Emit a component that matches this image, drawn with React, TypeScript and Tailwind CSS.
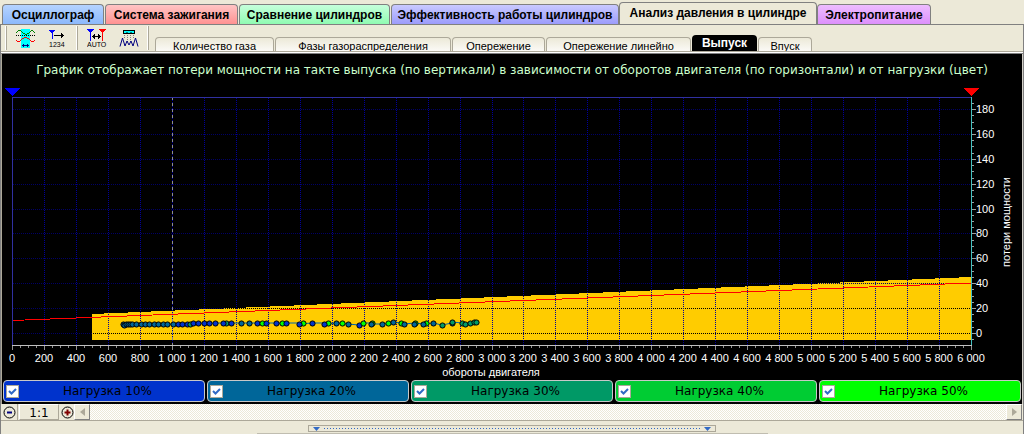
import { useState } from "react";

const mainTabs = [
    { label: "Осциллограф", style: "w-[102px] mr-px bg-linear-to-b from-[#b5d3ff] to-[#8cb8fb]" },
    { label: "Система зажигания", style: "w-[133px] mr-px bg-linear-to-b from-[#ffc4c4] to-[#ff9292]" },
    { label: "Сравнение цилиндров", style: "w-[151px] mr-px bg-linear-to-b from-[#c4ffdb] to-[#90fbb2]" },
    { label: "Эффективность работы цилиндров", style: "w-[228px] bg-linear-to-b from-[#c9c9ff] to-[#9c9cfb]" },
    { label: "Анализ давления в цилиндре", style: "w-[198px] bg-[#ece9d8]" },
    { label: "Электропитание", style: "w-[114px] bg-linear-to-b from-[#edbcff] to-[#dd90fb]" },
]

const subTabs = [
    { label: "Количество газа", width: "w-[119px]" },
    { label: "Фазы газораспределения", width: "w-[176px]" },
    { label: "Опережение", width: "w-[93px]" },
    { label: "Опережение линейно", width: "w-[145px]" },
    { label: "Выпуск", width: "w-[65px]" },
    { label: "Впуск", width: "w-[54px]" },
]

const loads = [
    { label: "Нагрузка 10%", color: "bg-[#0033cc]" },
    { label: "Нагрузка 20%", color: "bg-[#006699]" },
    { label: "Нагрузка 30%", color: "bg-[#009966]" },
    { label: "Нагрузка 40%", color: "bg-[#00cc33]" },
    { label: "Нагрузка 50%", color: "bg-[#00ff00]" },
]

const B = "#0033cc"
const T = "#006699"
const G = "#009966"
const L = "#00ff00"

// x, y, color
const points: [number, number, string][] = [
    [121, 238, T], [122, 239, T], [124, 238, T], [126, 238, T], [128, 238, T], [130, 238, T], [134, 238, T], [139, 238, T],
    [143, 238, T], [147, 238, T], [152, 238, T], [156, 238, T], [161, 238, T], [165, 238, T], [171, 238, T], [176, 238, B],
    [180, 238, B], [185, 238, B], [188, 238, G], [191, 237, B], [196, 237, B], [202, 237, B], [207, 237, B], [213, 237, B],
    [224, 237, G], [221, 237, B], [229, 237, B], [239, 237, T], [247, 237, T], [255, 237, B], [260, 237, L], [264, 237, B],
    [274, 237, B], [280, 237, L], [284, 237, B], [301, 237, L], [297, 238, B], [310, 237, B], [326, 237, L], [322, 238, B],
    [334, 237, T], [340, 237, L], [346, 238, T], [357, 239, B], [361, 237, L], [370, 237, L], [369, 238, T], [380, 238, T],
    [386, 237, L], [391, 236, T], [399, 237, L], [402, 238, T], [413, 237, L], [412, 238, T], [424, 237, L], [421, 238, T],
    [431, 237, T], [440, 239, G], [450, 237, T], [450, 236, G], [460, 237, G], [463, 238, G], [468, 237, G], [472, 236, G],
    [474, 236, G],
]

const rpmX = (rpm) => Math.round(10 + rpm * 959 / 6000)
const lossY = (v) => Math.round(247 - v * 1.244)

const rpmTicks = Array.from({ length: 31 }, (_, i) => i * 200)
const lossTicks = Array.from({ length: 10 }, (_, i) => i * 20)

const formatRpm = (n) => n < 1000 ? String(n) : Math.floor(n / 1000) + " " + String(n % 1000).padStart(3, "0")

const Chart = () => {
    const minorX = Array.from({ length: 121 }, (_, i) => i * 50)
    const minorY = Array.from({ length: 39 }, (_, i) => i * 5 - 5)
    return (
        <svg viewBox="0 0 1020 294" className="block w-full" shapeRendering="crispEdges">
            <polygon points="90,228 969,191 969,254 90,254" fill="#ffcc00" />
            {lossTicks.map(v =>
                <g key={v}>
                    <line x1="11" x2="969" y1={lossY(v) + 0.5} y2={lossY(v) + 0.5} stroke="#000066" strokeDasharray="1 1" />
                    {v < 40 && <line x1={v === 0 ? 91 : 225} x2="969" y1={lossY(v) + 0.5} y2={lossY(v) + 0.5} stroke="#000000" strokeDasharray="1 1" />}
                </g>
            )}
            {rpmTicks.slice(1, 30).map(r =>
                <line key={r} x1={rpmX(r) + 0.5} x2={rpmX(r) + 0.5} y1="12" y2="259" stroke="#000099" strokeDasharray="1 1" />
            )}
            <line x1="170.5" x2="170.5" y1="11" y2="259" stroke="#909090" strokeDasharray="3 3" />
            <line x1="10" x2="969" y1="234.5" y2="197" stroke="#ff0000" />

            <g shapeRendering="geometricPrecision">
                <polyline points={points.map(p => p[0] + "," + p[1]).join(" ")} fill="none" stroke="#0066aa" />
                {points.map(([x, y, color], i) =>
                    <circle key={i} cx={x + 0.5} cy={y + 0.5} r="2.6" fill={color} stroke="#000000" />
                )}
            </g>

            {/* frame and axes */}
            <path d="M10.5 259V11.5H969" fill="none" stroke="#3030a0" />
            <path d="M10 259.5H970" stroke="#c0c0c0" />
            <path d="M969.5 11V259" stroke="#40c0c0" />
            {minorX.map((r, i) =>
                <line key={r} x1={rpmX(r) + 0.5} x2={rpmX(r) + 0.5} y1="260" y2={i % 4 === 0 ? 264 : 262} stroke="#909090" />
            )}
            {minorY.map(v =>
                <line key={v} x1="970" x2={v % 20 === 0 ? 974 : 972} y1={lossY(v) + 0.5} y2={lossY(v) + 0.5} stroke="#a0a0a0" />
            )}
            <path d="M2 2h16l-8 8z" fill="#0000ff" />
            <path d="M961 2h16l-8 8z" fill="#ff0000" />

            <g fill="#ffffff" className="text-[11px]">
                {rpmTicks.map(r =>
                    <text key={r} x={rpmX(r)} y="276" textAnchor="middle">{formatRpm(r)}</text>
                )}
                {lossTicks.map(v =>
                    <text key={v} x="974" y={lossY(v) + 4}>{v}</text>
                )}
                <text x="489" y="290" textAnchor="middle">обороты двигателя</text>
                <text x="1008" y="136" textAnchor="middle" transform="rotate(-90 1008 136)">потери мощности</text>
            </g>
        </svg>
    )
}

const RangeIcon = () => (
    <svg width="20" height="20" fill="none" shapeRendering="crispEdges">
        <path d="M5 1h9v19H5z" fill="#00ffff" />
        <path d="M0 4.5h1M1 3.5h1M2 2.5h3M5 3.5h1M6 4.5h1M7 5.5h2M9 6.5h2M11 5.5h2M13 4.5h1M14 3.5h1M15 2.5h2M17 3.5h1M18 4.5h1" stroke="#008000" />
        <path d="M0 7.5h19" stroke="#000000" strokeDasharray="1 1" />
        <path d="M0 12.5h1M1 13.5h3M4 12.5h1M5 11.5h1M6 10.5h2M8 9.5h3M11 10.5h2M13 11.5h1M14 12.5h1M15 13.5h3M18 12.5h1" stroke="#ff0000" />
        <path d="M6 17.5h7M7.5 16v3M11.5 16v3" stroke="#000080" />
    </svg>
)

const NumbersIcon = () => (
    <svg width="20" height="20" shapeRendering="crispEdges">
        <path d="M1 2h6v1H6v1H5v7H4V5H3V4H2V3H1z" fill="#0000ff" />
        <path d="M6 7h7V5h1v1h1v1h1v1h-1v1h-1v1h-1V8H6z" fill="#000000" />
        <text x="1" y="19" className="text-[7px]">1234</text>
    </svg>
)

const AutoIcon = () => (
    <svg width="20" height="20" shapeRendering="crispEdges">
        <path d="M0 1h7v1H6v1H5v1H4v9H3V4H2V3H1V2H0z" fill="#0000ff" />
        <path d="M12 1h7v1h-1v1h-1v1h-1v9h-1V4h-1V3h-1V2h-1z" fill="#ff0000" />
        <path d="M5 8h1V7h1V6h1v2h3V6h1v1h1v1h1v1h-1v1h-1v1h-1V9H8v2H7v-1H6V9H5z" fill="#000000" />
        <text x="0" y="19" className="text-[7px]">AUTO</text>
    </svg>
)

const PeaksIcon = () => (
    <svg width="20" height="20" fill="none">
        <g shapeRendering="crispEdges">
            <path d="M4.5 2.5h11v3h-11z" fill="#00ffff" stroke="#000000" />
            <path d="M7 4h2M11 4h2" stroke="#008080" />
            <path d="M5.5 7v4M8.5 7v8M11.5 7v8M14.5 7v4" stroke="#808080" strokeDasharray="1 1" />
        </g>
        <path d="M1 18.500L3.500 10L6 18L8 13L10 17L12 13L14 18L16.500 10L19 18.500" stroke="#000080" />
    </svg>
)

const Separator = () => <div className="h-6 w-0.5 border-l border-r border-l-white border-r-[#aca899]" />

const iconButton = "flex h-5 w-5 items-center justify-center"

const App = () => {
    const [tab, setTab] = useState(4)
    const [subTab, setSubTab] = useState(4)
    const [checked, setChecked] = useState(loads.map(() => true))

    return (
        <div className="bg-[#ece9d8] font-['Liberation_Sans',sans-serif] text-black">
            <div className="flex h-6 items-end pl-0.5 pt-0.5">
                {mainTabs.map((t, i) =>
                    <button
                        key={t.label}
                        onClick={() => setTab(i)}
                        className={`${t.style} shrink-0 whitespace-nowrap rounded-t border border-b-0 border-[#808080] text-[12px] font-bold ${i === tab ? "h-[22px] pb-0.5 leading-4" : "h-5 leading-5"}`}
                    >
                        {t.label}
                    </button>
                )}
            </div>

            <div className="border-x border-t border-[#808080]">
                <div className="flex h-[26px] items-end">
                    <div className="flex h-full items-center pl-1">
                        <Separator />
                        <button aria-label="Диапазон" className={`${iconButton} ml-[9px]`}><RangeIcon /></button>
                        <button aria-label="Значения" className={`${iconButton} ml-3`}><NumbersIcon /></button>
                        <div className="ml-2"><Separator /></div>
                        <button aria-label="Авто" className={`${iconButton} ml-[9px]`}><AutoIcon /></button>
                        <button aria-label="Пики" className={`${iconButton} ml-3`}><PeaksIcon /></button>
                        <div className="ml-2"><Separator /></div>
                    </div>
                    <div className="ml-1.5 flex h-4 items-end gap-px overflow-hidden">
                        {subTabs.map((t, i) =>
                            <button
                                key={t.label}
                                onClick={() => setSubTab(i)}
                                className={`${t.width} shrink-0 overflow-hidden whitespace-nowrap rounded-t ${i === subTab ? "h-4 bg-black text-[12px] font-bold leading-4 text-white" : "h-[14px] border border-b-0 border-[#aca899] bg-linear-to-b from-[#ece9d8] to-[#fbfaf6] text-[11px] leading-4"}`}
                            >
                                {t.label}
                            </button>
                        )}
                    </div>
                </div>
                <div className="h-[3px] border-b border-t border-b-[#808080] border-t-[#aca899] bg-white" />

                <div className="border-x border-l-[#aca899] border-r-[#d4d0c8] bg-black pb-0.5">
                    <h1 className="text-center font-['DejaVu_Sans',sans-serif] text-[12px] leading-8 text-[#ccffcc]">
                        График отображает потери мощности на такте выпуска (по вертикали) в зависимости от оборотов двигателя (по горизонтали) и от нагрузки (цвет)
                    </h1>
                    <Chart />
                    <div className="grid grid-cols-5 gap-0.5 px-px">
                        {loads.map((load, i) =>
                            <label key={load.label} className={`${load.color} flex h-[22px] items-center rounded border border-[#c8c8c8] pl-0.5 pr-2`}>
                                <span className="relative flex">
                                    <input
                                        type="checkbox"
                                        checked={checked[i]}
                                        onChange={() => setChecked(checked.map((c, j) => j === i ? !c : c))}
                                        className="peer h-[13px] w-[13px] appearance-none border border-[#aca899] bg-white"
                                    />
                                    <svg viewBox="0 0 13 13" className="pointer-events-none absolute inset-0 hidden peer-checked:block" fill="none" stroke="#316ac5" strokeWidth="2">
                                        <path d="M3 6l2.5 2.5L10 4" />
                                    </svg>
                                </span>
                                <span className="flex-1 text-center font-['DejaVu_Sans',sans-serif] text-[12px] leading-5">{load.label}</span>
                            </label>
                        )}
                    </div>
                </div>

                <div className="flex h-4 items-stretch border-x border-[#ece9d8]">
                    <button aria-label="Уменьшить" className="flex w-4 items-center justify-center border-r border-[#aca899]">
                        <svg width="13" height="13" fill="none"><circle cx="6.5" cy="6.5" r="5.5" stroke="#000" /><path d="M4 6.5h5" stroke="#000080" strokeWidth="2" /></svg>
                    </button>
                    <button className="mx-px w-[40px] border border-b-[#aca899] border-l-white border-r-[#aca899] border-t-white font-['DejaVu_Sans',sans-serif] text-[12px] leading-4">1:1</button>
                    <button aria-label="Увеличить" className="flex w-[14px] items-center justify-center">
                        <svg width="13" height="13" fill="none"><circle cx="6.5" cy="6.5" r="5.5" stroke="#000" /><path d="M3.5 6.5h6M6.5 3.5v6" stroke="#800000" strokeWidth="2" /></svg>
                    </button>
                    <button aria-label="Влево" className="flex w-4 items-center justify-center border border-b-[#808080] border-l-white border-r-[#808080] border-t-white">
                        <svg width="5" height="8"><path d="M5 0v8L0 4z" fill="#aca899" /></svg>
                    </button>
                    <div className="flex-1 bg-[repeating-conic-gradient(#ffffff_0_25%,#ece9d8_0_50%)] bg-size-[2px_2px]" />
                    <button aria-label="Вправо" className="flex w-4 items-center justify-center border border-b-[#808080] border-l-white border-r-[#808080] border-t-white">
                        <svg width="5" height="8"><path d="M0 0v8l5-4z" fill="#aca899" /></svg>
                    </button>
                </div>
                <div className="flex h-[14px] flex-col items-center justify-between border-t border-[#aca899] pt-1">
                    <div className="flex h-[7px] w-2/5 items-center gap-1 border border-[#aca899] px-1">
                        <svg width="7" height="4"><path d="M0 0h7L3.500 4z" fill="#316ac5" /></svg>
                        <div className="h-px flex-1 bg-[repeating-linear-gradient(90deg,#316ac5_0_1px,transparent_1px_3px)]" />
                        <svg width="7" height="4"><path d="M0 0h7L3.500 4z" fill="#316ac5" /></svg>
                    </div>
                    <div className="h-px w-1/2 bg-[#c0bdb0]" />
                </div>
            </div>
        </div>
    )
}

export default App;
